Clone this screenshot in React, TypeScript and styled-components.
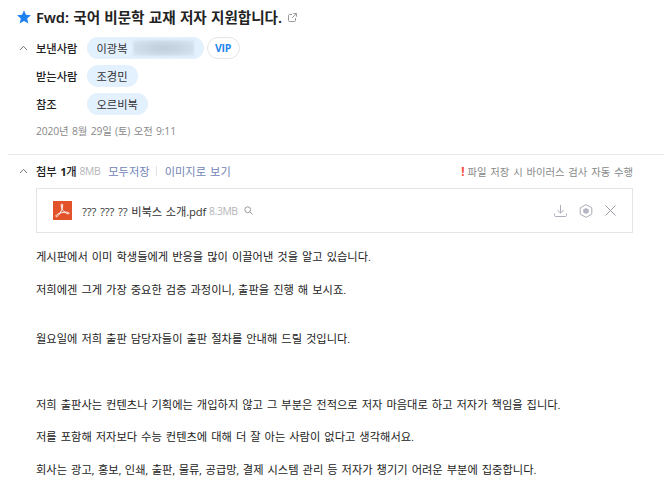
import styled, { createGlobalStyle } from "styled-components";

const receivers = [
  { label: "받는사람", name: "조경민" },
  { label: "참조", name: "오르비북" },
];

// 빈 문자열은 본문의 빈 줄이다.
const mailLines = [
  "게시판에서 이미 학생들에게 반응을 많이 이끌어낸 것을 알고 있습니다.",
  "",
  "저희에겐 그게 가장 중요한 검증 과정이니, 출판을 진행 해 보시죠.",
  "",
  "",
  "월요일에 저희 출판 담당자들이 출판 절차를 안내해 드릴 것입니다.",
  "",
  "",
  "",
  "저희 출판사는 컨텐츠나 기획에는 개입하지 않고 그 부분은 전적으로 저자 마음대로 하고 저자가 책임을 집니다.",
  "",
  "저를 포함해 저자보다 수능 컨텐츠에 대해 더 잘 아는 사람이 없다고 생각해서요.",
  "",
  "회사는 광고, 홍보, 인쇄, 출판, 물류, 공급망, 결제 시스템 관리 등 저자가 챙기기 어려운 부분에 집중합니다.",
];

function FoldIcon() {
  return (
    <svg width="9" height="6" viewBox="0 0 9 6" fill="none" stroke="#777">
      <path d="M1 5l3.5-3.7L8 5" />
    </svg>
  );
}

function StarIcon() {
  return (
    <svg width="14" height="14" viewBox="0 0 14 14" fill="#1e82ec">
      <path d="M7 .2l2 4.5 4.9.5-3.7 3.3 1.1 4.9L7 10.9l-4.3 2.5 1.1-4.9L.1 5.2 5 4.7z" />
    </svg>
  );
}

function PopupIcon() {
  return (
    <svg width="9" height="9" viewBox="0 0 9 9" fill="none" stroke="#999">
      <path d="M4 1.5H1.5a1 1 0 0 0-1 1v5a1 1 0 0 0 1 1h5a1 1 0 0 0 1-1V5M5.3.5h3.2v3.2M8.3.7L4 5" />
    </svg>
  );
}

function PdfIcon() {
  return (
    <svg width="19" height="19" viewBox="0 0 19 19" fill="none">
      <path fill="#e2522b" d="M0 0h19v19H0z" />
      <path
        stroke="#fff"
        strokeLinejoin="round"
        d="M9.2 8.3C8 6 7.7 3 8.9 3s1 3-.1 5.600C7.6 11.8 4.7 15.9 3.2 15.600c-1.5-.5 1.3-3 5.3-3.9 3.5-.8 7.6-.8 7.7.5 0 1.5-4.500.2-7-3.900z"
      />
    </svg>
  );
}

function SearchIcon() {
  return (
    <svg width="9" height="9" viewBox="0 0 9 9" fill="none" stroke="#999">
      <circle cx="3.7" cy="3.7" r="2.9" />
      <path d="M5.8 5.8l2.7 2.7" />
    </svg>
  );
}

function DownloadIcon() {
  return (
    <svg width="13" height="12" viewBox="0 0 13 12" fill="none" stroke="#adadbb">
      <path d="M6.5 0v8M3.3 5l3.2 3.2L9.7 5M.6 8.5v2a1 1 0 0 0 1 1h9.8a1 1 0 0 0 1-1v-2" />
    </svg>
  );
}

function CloudSaveIcon() {
  return (
    <svg width="14" height="14" viewBox="0 0 14 14" fill="none" stroke="#adadbb">
      <path strokeLinejoin="round" d="M7 .6l5.8 3.2v6.4L7 13.4l-5.8-3.2V3.8z" />
      <path fill="#b6b6c2" stroke="none" d="M7 3.9l2.8 1.5v3.2L7 10.1 4.2 8.6V5.4z" />
    </svg>
  );
}

function CloseIcon() {
  return (
    <svg width="11" height="11" viewBox="0 0 11 11" fill="none" stroke="#9c9cad">
      <path d="M.5.5l10 10M10.5.5l-10 10" />
    </svg>
  );
}

function App() {
  return (
    <>
      <GlobalStyle />
      <StMail>
        <StHeader>
          <StTitleRow>
            <StarIcon />
            <StTitle>Fwd: 국어 비문학 교재 저자 지원합니다.</StTitle>
            <PopupIcon />
          </StTitleRow>
          <StPeople>
            <StPersonRow>
              <StFold>
                <FoldIcon />
              </StFold>
              <StLabel>보낸사람</StLabel>
              <StChip>
                이광복
                <StHiddenAddress />
              </StChip>
              <StVip>VIP</StVip>
            </StPersonRow>
            {receivers.map((receiver) => (
              <StPersonRow key={receiver.label}>
                <StFold />
                <StLabel>{receiver.label}</StLabel>
                <StChip>{receiver.name}</StChip>
              </StPersonRow>
            ))}
          </StPeople>
          <StDate>2020년 8월 29일 (토) 오전 9:11</StDate>
        </StHeader>
        <StAttachHeader>
          <StFold>
            <FoldIcon />
          </StFold>
          <StAttachCount>
            첨부 <b>1</b>개
          </StAttachCount>
          <StSize>8MB</StSize>
          <StAttachLink>모두저장</StAttachLink>
          <StBar />
          <StAttachLink>이미지로 보기</StAttachLink>
          <StNotice>
            <StMark>!</StMark>
            파일 저장 시 바이러스 검사 자동 수행
          </StNotice>
        </StAttachHeader>
        <StFile>
          <PdfIcon />
          <StFileName>??? ??? ?? 비북스 소개.pdf</StFileName>
          <StSize>8.3MB</StSize>
          <SearchIcon />
          <StFileActions>
            <DownloadIcon />
            <CloudSaveIcon />
            <CloseIcon />
          </StFileActions>
        </StFile>
        <StBody>
          {mailLines.map((line, index) => (
            <StLine key={index}>{line}</StLine>
          ))}
        </StBody>
      </StMail>
    </>
  );
}

const GlobalStyle = createGlobalStyle`
  * {
    box-sizing: border-box;
  }

  body {
    margin: 0;
    background-color: #fff;
    overflow: hidden;
    font-family: "Open Sans", "Noto Sans CJK KR", sans-serif;
    font-size: 11.25px;
    word-spacing: 1.1px;
    color: #222;
  }

  svg {
    display: block;
    flex-shrink: 0;
  }
`;

const StMail = styled.main`
  height: 497px;
  padding-left: 8px;
  overflow: hidden;
  white-space: nowrap;
`;

const StHeader = styled.header`
  height: 155px;
  border-bottom: 1px solid #e8e8eb;
`;

const StTitleRow = styled.div`
  display: flex;
  align-items: center;
  height: 34px;
  padding-left: 9px;
`;

const StTitle = styled.h1`
  margin: 0 6px 1px 5px;
  font-family: "Noto Sans", "Noto Sans CJK KR", sans-serif;
  font-size: 14.6px;
  font-weight: 600;
  line-height: 20px;
  letter-spacing: -0.05px;
  word-spacing: 0.6px;
`;

const StPeople = styled.div`
  display: flex;
  flex-direction: column;
  gap: 6px;
  padding-top: 3px;
`;

const StPersonRow = styled.div`
  display: flex;
  align-items: center;
  height: 22px;
`;

const StFold = styled.span`
  width: 28px;
  padding-left: 11px;
`;

const StLabel = styled.span`
  width: 51px;
  font-weight: 500;
`;

const StChip = styled.span`
  display: flex;
  align-items: center;
  height: 22px;
  padding: 0 10px 0 9.5px;
  border-radius: 11px;
  background-color: #e3f1fe;
  color: #333;
`;

const StHiddenAddress = styled.span`
  width: 61px;
  height: 16px;
  margin-left: 5px;
  background: radial-gradient(ellipse, #bfcddb 0%, #cad8e5 45%, #dae7f3 100%);
  filter: blur(1px);
`;

const StVip = styled.span`
  display: flex;
  align-items: center;
  justify-content: center;
  width: 33px;
  height: 22px;
  margin-left: 3px;
  border: 1px solid #e5e5e8;
  border-radius: 11px;
  font-size: 10.5px;
  font-weight: 700;
  letter-spacing: -0.3px;
  color: #2485ee;
`;

const StDate = styled.div`
  margin-top: 8px;
  padding-left: 28px;
  font-size: 10.35px;
  line-height: 16px;
  letter-spacing: -0.15px;
  word-spacing: 1px;
  color: #888;
`;

const StAttachHeader = styled.div`
  display: flex;
  align-items: center;
  height: 33px;
  padding: 0 31px 1px 0;
`;

const StAttachCount = styled.span`
  font-weight: 500;
  letter-spacing: -0.2px;
`;

const StSize = styled.span`
  margin-left: 3px;
  font-size: 10.35px;
  letter-spacing: -0.4px;
  color: #b4b4b8;
`;

const StAttachLink = styled.span`
  margin-left: 8px;
  color: #7184b8;
`;

const StBar = styled.span`
  width: 1px;
  height: 10px;
  margin-left: 6px;
  background-color: #e2e2e5;
`;

const StNotice = styled.span`
  margin-left: auto;
  font-size: 10.35px;
  color: #888;
`;

const StMark = styled.b`
  margin-right: 3px;
  font-size: 11.5px;
  color: #f5442f;
`;

const StFile = styled.div`
  display: flex;
  align-items: center;
  width: 597px;
  height: 45px;
  margin-left: 28px;
  padding: 0 16px;
  border: 1px solid #e4e4e9;
`;

const StFileName = styled.span`
  margin-left: 10px;
  letter-spacing: -0.15px;
  color: #333;

  & + ${StSize} {
    margin-right: 6px;
  }
`;

const StFileActions = styled.span`
  display: flex;
  align-items: center;
  gap: 12px;
  margin-left: auto;
`;

const StBody = styled.div`
  padding: 17px 0 0 28px;
  font-family: Roboto, "Noto Sans CJK KR", sans-serif;
  word-spacing: 1.2px;
`;

const StLine = styled.p`
  height: 16.4px;
  margin: 0;
  line-height: 16.4px;
`;

export default App;
